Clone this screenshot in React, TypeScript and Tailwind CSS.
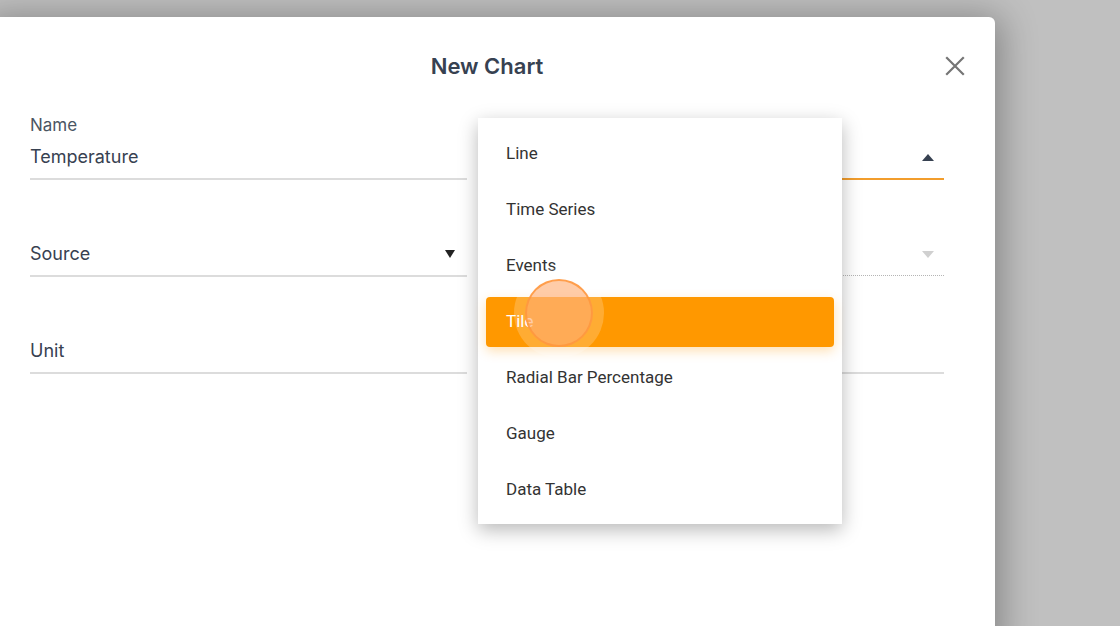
import React from 'react';

const items = ['Line', 'Time Series', 'Events', 'Tile', 'Radial Bar Percentage', 'Gauge', 'Data Table'];

function Field({ label, value, arrow, line }: { label?: string; value?: string; arrow?: React.ReactNode; line: string }) {
  return (
    <div className="flex flex-col">
      <div className="h-5 text-[17px] leading-5 text-[#4b5563]">{label}</div>
      <div className={`mt-[10px] flex items-center justify-between pb-[9px] ${line}`}>
        <span className="h-6 text-[18px] leading-6 text-[#374151]">{value}</span>
        {arrow}
      </div>
    </div>
  );
}

export default function App() {
  return (
    <div className="relative h-[626px] w-[1120px] overflow-hidden bg-[#c0c0c0]" style={{ fontFamily: 'Inter, "Noto Sans", sans-serif' }}>
      {/* Modal */}
      <div className="ml-[-21px] mt-[17px] h-[640px] w-[1016px] rounded-[6px] bg-white px-[51px] pt-[34px] shadow-[6px_0_36px_rgba(0,0,0,0.32)]">
        <div className="relative flex h-[30px] items-center justify-center">
          <h1 className="text-[22px] font-semibold leading-[30px] text-[#374151]">New Chart</h1>
          <button className="absolute right-[-21px] top-[5px] h-5 w-5">
            <svg viewBox="0 0 20 20" className="h-5 w-5">
              <path d="M2 2 L18 18 M18 2 L2 18" stroke="#757575" strokeWidth="2.2" strokeLinecap="square" />
            </svg>
          </button>
        </div>

        <div className="mt-[34px] grid grid-cols-2 gap-x-10 gap-y-[32px]">
          <Field label="Name" value="Temperature" line="border-b-2 border-[#dcdcdc]" />
          <Field
            label="Type"
            line="border-b-2 border-[#f29d2c]"
            arrow={
              <svg viewBox="0 0 12 7" className="mr-[10px] h-[7px] w-[12px]">
                <path d="M0 7 L6 0 L12 7 Z" fill="#374151" />
              </svg>
            }
          />
          <Field
            value="Source"
            line="border-b-2 border-[#dcdcdc]"
            arrow={
              <svg viewBox="0 0 10 8" className="mr-[12px] h-[8px] w-[10px]">
                <path d="M0 0 L10 0 L5 8 Z" fill="#222" />
              </svg>
            }
          />
          <Field
            line="border-b border-dotted border-[#b5b5b5]"
            arrow={
              <svg viewBox="0 0 12 7" className="mr-[10px] h-[7px] w-[12px]">
                <path d="M0 0 L12 0 L6 7 Z" fill="#d0d0d0" />
              </svg>
            }
          />
          <Field value="Unit" line="border-b-2 border-[#dcdcdc]" />
          <Field line="border-b-2 border-[#dcdcdc]" />
        </div>
      </div>

      {/* Dropdown menu */}
      <div
        className="absolute left-[478px] top-[118px] w-[364px] bg-white pb-[6px] pt-[8px] shadow-[0_6px_18px_rgba(0,0,0,0.28)]"
        style={{ fontFamily: 'Roboto, "Liberation Sans", sans-serif' }}
      >
        {items.map((it) =>
          it === 'Tile' ? (
            <div key={it} className="h-14 px-2 py-[3px]">
              <div className="relative flex h-[50px] items-center rounded-[4px] bg-[#ff9800] px-5 text-[17px] text-white shadow-[0_4px_12px_rgba(255,152,0,0.3)]">
                Tile
                <span className="absolute left-[28px] top-[-29px] h-[90px] w-[90px] rounded-full bg-[rgba(255,255,255,0.2)]" />
                <span className="absolute left-[39px] top-[-18px] h-[68px] w-[68px] rounded-full border-2 border-[rgba(255,150,60,0.85)] bg-[rgba(255,170,110,0.6)]" />
              </div>
            </div>
          ) : (
            <div key={it} className="flex h-14 items-center px-7 text-[17px] text-[#333]">
              {it}
            </div>
          )
        )}
      </div>
    </div>
  );
}
